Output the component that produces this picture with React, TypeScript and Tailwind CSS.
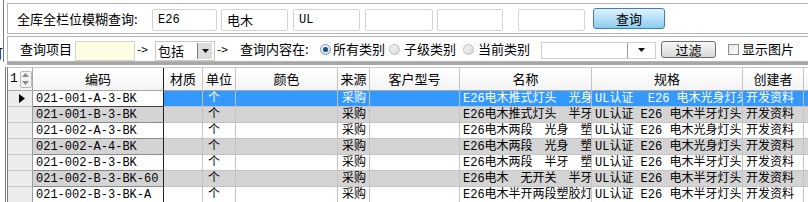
import * as React from "react"

const cjk = "font-['Noto_Sans_CJK_SC','Noto_Sans_CJK_JP',sans-serif]"
const mono = "font-['Liberation_Mono','Noto_Sans_CJK_SC',monospace]"

type Row = {
  code: string
  name: string
  spec: string
}

const rows: Row[] = [
  { code: "021-001-A-3-BK", name: "E26电木推式灯头　光身塑胶", spec: "UL认证  E26 电木光身灯头" },
  { code: "021-001-B-3-BK", name: "E26电木推式灯头　半牙塑胶", spec: "UL认证 E26 电木半牙灯头" },
  { code: "021-002-A-3-BK", name: "E26电木两段　光身　塑胶", spec: "UL认证 E26 电木光身灯头" },
  { code: "021-002-A-4-BK", name: "E26电木两段　光身　塑胶", spec: "UL认证 E26 电木光身灯头" },
  { code: "021-002-B-3-BK", name: "E26电木两段　半牙　塑胶", spec: "UL认证 E26 电木半牙灯头" },
  { code: "021-002-B-3-BK-60", name: "E26电木　无开关　半牙塑胶", spec: "UL认证 E26 电木半牙灯头" },
  { code: "021-002-B-3-BK-A", name: "E26电木半开两段塑胶灯头", spec: "UL认证 E26 电木半牙灯头" },
]

function TextBox({ value, className }: { value?: string; className?: string }) {
  return (
    <div
      className={`h-[22px] shrink-0 border border-[#d2d2d2] rounded-[2px] bg-white pl-[5px] flex items-center text-[12px] ${mono} ${className ?? ""}`}
    >
      {value}
    </div>
  )
}

function DownArrow() {
  return (
    <svg width="7" height="4" viewBox="0 0 7 4">
      <path d="M0 0h7L3.5 4z" fill="#111" />
    </svg>
  )
}

function Radio({ checked }: { checked?: boolean }) {
  return (
    <span
      className={`w-[11px] h-[11px] shrink-0 rounded-full border flex items-center justify-center ${
        checked
          ? "border-[#7f98b4] bg-gradient-to-br from-[#f4f8fc] to-[#c9d6e4]"
          : "border-[#bcbcbc] bg-gradient-to-br from-[#f6f6f6] to-[#dadada]"
      }`}
    >
      {checked && <span className="w-[5px] h-[5px] rounded-full bg-[#1f4f86]" />}
    </span>
  )
}

export default function App() {
  const cellBase = "h-full shrink-0 border-r border-b overflow-hidden whitespace-nowrap pl-[3px] flex items-center"

  return (
    <div className={`w-[808px] h-[202px] overflow-hidden bg-white text-black ${cjk}`}>
      {/* Query panels */}
      <div className="flex w-[830px]">
        <div className="w-[4px] h-[62px] shrink-0 border-r border-[#7a7a7a] overflow-hidden flex justify-end">
          <span className="mt-[46px] text-[13px] leading-[14px] shrink-0">可</span>
        </div>
        <div className="ml-[3px] flex-1 flex flex-col">
          <div className="mt-[3px] h-[31px] border border-[#b5b5b5] pl-[9px] flex items-center text-[13px]">
            <span className="w-[135px] shrink-0 leading-[16px]">全库全栏位模糊查询:</span>
            <TextBox value="E26" className="w-[65px] mt-[2px]" />
            <TextBox value="电木" className={`w-[67px] ml-[4px] mt-[2px] !text-[13px] ${cjk}`} />
            <TextBox value="UL" className="w-[67px] ml-[5px] mt-[2px]" />
            <TextBox className="w-[68px] ml-[5px] mt-[2px]" />
            <TextBox className="w-[66px] ml-[4px] mt-[2px]" />
            <TextBox className="w-[67px] ml-[15px] mt-[2px]" />
            <button className="ml-[8px] w-[72px] h-[21px] shrink-0 rounded-[3px] border border-[#3d7fb0] bg-gradient-to-b from-[#dff2fd] via-[#b5e0f8] to-[#8ccdf0] text-[13px] leading-[16px] flex items-center justify-center">
              查询
            </button>
          </div>
          <div className="mt-[2px] h-[26px] border border-[#b5b5b5] pl-[12px] flex items-center text-[13px] leading-[16px]">
            <span className="w-[55px] shrink-0">查询项目</span>
            <div className="w-[60px] h-[20px] mt-[4px] shrink-0 border border-[#d2d2d2] bg-[#fffde3]" />
            <span className="w-[20px] shrink-0 pl-[2px] text-[12px]">-&gt;</span>
            <div className="w-[60px] h-[20px] mt-[4px] shrink-0 border border-[#c6c6c6] bg-white flex items-center">
              <span className="flex-1 pl-[2px]">包括</span>
              <span className="w-[15px] h-[16px] mr-[2px] border-l border-[#7a7a7a] bg-[#dcdcdc] flex items-center justify-center">
                <DownArrow />
              </span>
            </div>
            <span className="w-[25px] shrink-0 pl-[2px] text-[12px]">-&gt;</span>
            <span className="w-[80px] shrink-0">查询内容在:</span>
            <Radio checked />
            <span className="w-[53px] ml-[2px] shrink-0">所有类别</span>
            <span className="ml-[3px]"><Radio /></span>
            <span className="w-[54px] ml-[4px] shrink-0">子级类别</span>
            <span className="ml-[5px]"><Radio /></span>
            <span className="w-[53px] ml-[4px] shrink-0">当前类别</span>
            <div className="ml-[10px] w-[115px] h-[17px] mt-[2px] shrink-0 border border-[#cfcfcf] bg-white flex">
              <span className="flex-1" />
              <span className="w-[28px] border-l border-[#9a9a9a] flex items-center justify-center">
                <DownArrow />
              </span>
            </div>
            <button className="ml-[5px] w-[55px] h-[17px] mt-[1px] shrink-0 rounded-[3px] border border-[#6f6f6f] bg-gradient-to-b from-[#f7f7f7] to-[#d9d9d9] text-[13px] leading-[14px] flex items-center justify-center">
              过滤
            </button>
            <span className="ml-[12px] w-[11px] h-[11px] shrink-0 border border-[#8e8f8f] bg-gradient-to-br from-[#e6e6e6] to-[#ffffff]" />
            <span className="ml-[3px] shrink-0">显示图片</span>
          </div>
          <div className="h-[3px] bg-[#a6a6a6]" />
        </div>
      </div>

      {/* Grid */}
      <div className={`mt-[2px] ml-[5px] w-[860px] border-l-[3px] border-double border-[#7c7c7c] ${cjk}`}>
        {/* Header */}
        <div className="h-[24px] flex border-t border-[#c8c8c8] bg-gradient-to-b from-white to-[#f3f3f3] text-[13px] leading-[16px]">
          <div className="w-[25px] h-full shrink-0 border-r border-b border-[#a8a8a8] flex items-center">
            <span className={`pl-[2px] ${mono} text-[13px]`}>1</span>
            <span className="ml-[2px] w-[13px] h-[17px] border border-[#b8b8b8] rounded-[2px] bg-[#f4f4f4] flex flex-col items-center justify-around">
              <svg width="7" height="4" viewBox="0 0 7 4"><path d="M0 4h7L3.5 0z" fill="#8a8a8a" /></svg>
              <svg width="7" height="4" viewBox="0 0 7 4"><path d="M0 0h7L3.5 4z" fill="#8a8a8a" /></svg>
            </span>
          </div>
          {[
            ["编码", "w-[131px] border-r-[#202020]"],
            ["材质", "w-[39px]"],
            ["单位", "w-[33px]"],
            ["颜色", "w-[102px]"],
            ["来源", "w-[32px]"],
            ["客户型号", "w-[90px]"],
            ["名称", "w-[132px]"],
            ["规格", "w-[151px]"],
            ["创建者", "w-[61px]"],
            ["", "w-[60px]"],
          ].map(([label, w]) => (
            <div
              key={w}
              className={`h-full shrink-0 border-r border-b border-[#c4c4c4] border-b-[#a8a8a8] flex items-center justify-center ${w}`}
            >
              {label}
            </div>
          ))}
        </div>

        {/* Rows */}
        {rows.map((r, i) => {
          const selected = i === 0
          const stripe = i % 2 === 1
          const bg = selected ? "bg-[#3399ff] text-white" : stripe ? "bg-[#d4d4d4]" : "bg-white"
          const line = "border-[#c4c4c4]"
          return (
            <div key={r.code} className={`h-[16px] flex text-[12px] leading-[16px] ${mono}`}>
              <div className="w-[25px] h-full shrink-0 border-r border-b border-[#9c9c9c] border-b-[#c8c8c8] bg-[#ececec] flex items-center pl-[11px]">
                {selected && (
                  <svg width="6" height="9" viewBox="0 0 6 9">
                    <path d="M0 0l6 4.5L0 9z" fill="#000" />
                  </svg>
                )}
              </div>
              <div
                className={`${cellBase} w-[131px] border-r-[#202020] pl-[2px] ${
                  selected ? "bg-white border-b-[#404040]" : stripe ? "bg-[#d4d4d4] border-b-[#8a8a8a]" : "bg-white border-b-[#8a8a8a]"
                }`}
              >
                {r.code}
              </div>
              <div className={`${cellBase} ${line} ${bg} w-[39px]`} />
              <div className={`${cellBase} ${line} ${bg} w-[33px] pl-[5px]`}>个</div>
              <div className={`${cellBase} ${line} ${bg} w-[102px]`} />
              <div className={`${cellBase} ${line} ${bg} w-[32px] pl-[4px]`}>采购</div>
              <div className={`${cellBase} ${line} ${bg} w-[90px]`} />
              <div className={`${cellBase} ${line} ${bg} w-[132px] pl-[2px]`}>{r.name}</div>
              <div className={`${cellBase} ${line} ${bg} w-[151px] pl-[1px] whitespace-pre`}>{r.spec}</div>
              <div className={`${cellBase} ${line} ${bg} w-[61px] pl-[2px]`}>开发资料</div>
              <div className={`${cellBase} ${line} ${bg} w-[60px]`} />
            </div>
          )
        })}
      </div>
    </div>
  )
}
